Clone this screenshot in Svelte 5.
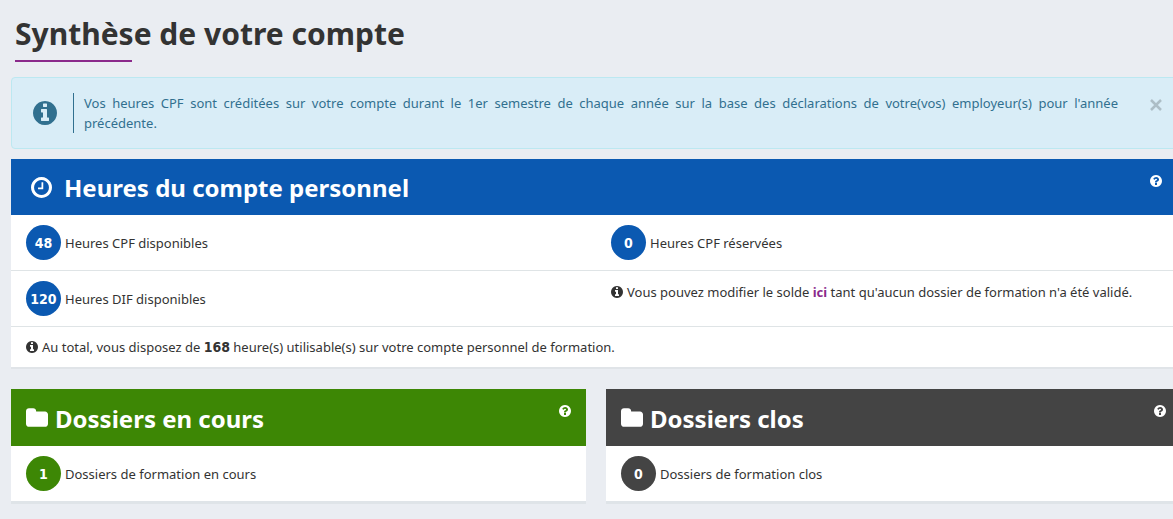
<script lang="ts">
  type Folder = { title: string; label: string; count: number; tone: string };

  let showNotice = $state(true);

  const cpf = 48;
  const dif = 120;
  const reserved = 0;
  const total = cpf + dif;

  const folders: Folder[] = [
    { title: "Dossiers en cours", label: "Dossiers de formation en cours", count: 1, tone: "green" },
    { title: "Dossiers clos", label: "Dossiers de formation clos", count: 0, tone: "dark" },
  ];
</script>

{#snippet info()}
  <svg class="info" viewBox="128 128 1536 1536" aria-hidden="true">
    <path d="M1152 1376v-160q0-14-9-23t-23-9h-96v-512q0-14-9-23t-23-9h-320q-14 0-23 9t-9 23v160q0 14 9 23t23 9h96v320h-96q-14 0-23 9t-9 23v160q0 14 9 23t23 9h448q14 0 23-9t9-23zm-128-896v-160q0-14-9-23t-23-9h-192q-14 0-23 9t-9 23v160q0 14 9 23t23 9h192q14 0 23-9t9-23zm640 416q0 209-103 385.5t-279.5 279.5-385.5 103-385.5-103-279.5-279.5-103-385.5 103-385.5 279.5-279.5 385.5-103 385.5 103 279.5 279.5 103 385.5z" />
  </svg>
{/snippet}

{#snippet help()}
  <button class="help" type="button" aria-label="Aide">
    <svg viewBox="128 128 1536 1536" aria-hidden="true">
      <path d="M1024 1376v-192q0-14-9-23t-23-9h-192q-14 0-23 9t-9 23v192q0 14 9 23t23 9h192q14 0 23-9t9-23zm256-672q0-88-55.5-163t-138.5-116-170-41q-243 0-371 213-15 24 8 42l132 100q7 6 19 6 16 0 25-12 53-68 86-92 34-24 86-24 48 0 85.5 26t37.5 59q0 38-20 61t-68 45q-63 28-115.5 86.5t-52.5 125.5v36q0 14 9 23t23 9h192q14 0 23-9t9-23q0-19 21.5-49.5t54.5-49.5q32-18 49-28.5t46-35 44.5-48 28-60.5 12.5-81zm384 192q0 209-103 385.5t-279.5 279.5-385.5 103-385.5-103-279.5-279.5-103-385.5 103-385.5 279.5-279.5 385.5-103 385.5 103 279.5 279.5 103 385.5z" />
    </svg>
  </button>
{/snippet}

<div class="viewport">
  <main>
    <h1>Synthèse de votre compte</h1>

    {#if showNotice}
      <div class="notice" role="status">
        {@render info()}
        <p>
          Vos heures CPF sont créditées sur votre compte durant le 1er semestre de chaque année sur la
          base des déclarations de votre(vos) employeur(s) pour l'année précédente.
        </p>
        <button class="close" type="button" aria-label="Fermer" onclick={() => (showNotice = false)}>
          <svg viewBox="0 0 12 12" aria-hidden="true"><path d="M1 1l10 10M11 1L1 11" /></svg>
        </button>
      </div>
    {/if}

    <section class="panel blue">
      <header>
        <svg class="clock" viewBox="128 128 1536 1536" aria-hidden="true">
          <path d="M1024 544v448q0 14-9 23t-23 9h-320q-14 0-23-9t-9-23v-64q0-14 9-23t23-9h224v-352q0-14 9-23t23-9h64q14 0 23 9t9 23zm416 352q0-148-73-273t-198-198-273-73-273 73-198 198-73 273 73 273 198 198 273 73 273-73 198-198 73-273zm224 0q0 209-103 385.5t-279.5 279.5-385.5 103-385.5-103-279.5-279.5-103-385.5 103-385.5 279.5-279.5 385.5-103 385.5 103 279.5 279.5 103 385.5z" />
        </svg>
        <h2>Heures du compte personnel</h2>
        {@render help()}
      </header>
      <div class="row">
        <div class="cell"><span class="badge">{cpf}</span> Heures CPF disponibles</div>
        <div class="cell"><span class="badge">{reserved}</span> Heures CPF réservées</div>
      </div>
      <div class="row">
        <div class="cell"><span class="badge">{dif}</span> Heures DIF disponibles</div>
        <div class="cell top">
          {@render info()}
          <p>Vous pouvez modifier le solde <a href="#solde">ici</a> tant qu'aucun dossier de formation n'a été validé.</p>
        </div>
      </div>
      <div class="cell">
        {@render info()}
        <p>Au total, vous disposez de <strong>{total}</strong> heure(s) utilisable(s) sur votre compte personnel de formation.</p>
      </div>
    </section>

    <div class="folders">
      {#each folders as folder (folder.title)}
        <section class="panel {folder.tone}">
          <header>
            <svg class="folder" viewBox="64 128 1664 1408" aria-hidden="true">
              <path d="M1728 608v704q0 92-66 158t-158 66h-1216q-92 0-158-66t-66-158v-960q0-92 66-158t158-66h320q92 0 158 66t66 158v32h672q92 0 158 66t66 158z" />
            </svg>
            <h2>{folder.title}</h2>
            {@render help()}
          </header>
          <div class="cell"><span class="badge">{folder.count}</span> {folder.label}</div>
        </section>
      {/each}
    </div>
  </main>
</div>

<style>
  :global(body) {
    background: #eaedf2;
  }

  .viewport {
    overflow: hidden;
    color: #333;
    font: 13px/20px Tahoma, "Noto Sans", sans-serif;
  }

  /* the content column runs slightly past the right edge of the window */
  main {
    margin: 0 -8px 0 11px;
    padding: 12px 0 15px;
  }

  h1,
  h2,
  p {
    margin: 0;
  }

  svg {
    display: block;
    flex: none;
    fill: currentColor;
  }

  button {
    padding: 0;
    border: 0;
    background: none;
    color: inherit;
    cursor: pointer;
  }

  h1 {
    width: fit-content;
    margin: 0 4px 15px;
    padding-bottom: 6px;
    background: linear-gradient(#8b2a8b, #8b2a8b) left bottom / 30% 2px no-repeat;
    font-size: 30px;
    line-height: 44px;
  }

  .notice {
    display: flex;
    align-items: center;
    margin-bottom: 10px;
    padding: 15px 18px 15px 21px;
    border: 1px solid #bce8f1;
    border-radius: 4px;
    background: #d9edf7;
    color: #31708f;
  }

  .notice .info {
    width: 24px;
    height: 24px;
  }

  .notice p {
    flex: 1;
    margin: 0 32px 0 16px;
    padding-left: 10px;
    border-left: 1px solid #31708f;
    text-align: justify;
  }

  .close {
    align-self: flex-start;
    padding-top: 6px;
    color: #adbec6;
  }

  .close svg {
    width: 12px;
    height: 12px;
    fill: none;
    stroke: currentColor;
    stroke-width: 2.5;
  }

  .panel {
    background: #fff;
    box-shadow: 0 2px 0 #e0e4e8;
  }

  .blue {
    --tone: #0b59b1;
  }

  .green {
    --tone: #3d8705;
  }

  .dark {
    --tone: #444;
  }

  header {
    display: flex;
    align-items: center;
    gap: 7px;
    height: 57px;
    padding: 0 15px;
    background: var(--tone);
    color: #fff;
  }

  .blue header {
    gap: 12px;
    height: 56px;
    padding: 0 19px 0 20px;
  }

  h2 {
    flex: 1;
    padding-top: 2px;
    font-size: 24px;
    line-height: 32px;
  }

  .clock {
    width: 21px;
    height: 21px;
  }

  .folder {
    width: 22px;
    height: 19px;
  }

  .help {
    align-self: flex-start;
    padding-top: 16px;
  }

  .help svg {
    width: 12px;
    height: 12px;
  }

  .row {
    display: grid;
    grid-template-columns: 1fr 1fr;
    border-bottom: 1px solid #dfe4e6;
  }

  .cell {
    display: flex;
    align-items: center;
    gap: 4px;
    padding: 10px 15px;
  }

  .cell .info {
    width: 12px;
    height: 12px;
  }

  .top {
    align-items: flex-start;
    padding-top: 11px;
  }

  .top .info {
    margin-top: 4px;
  }

  .badge {
    display: grid;
    place-items: center;
    width: 35px;
    height: 35px;
    border-radius: 50%;
    background: var(--tone);
    color: #fff;
  }

  .badge,
  strong {
    font-family: Tahoma, "DejaVu Sans Condensed", sans-serif;
    font-size: 14px;
    font-weight: bold;
  }

  a {
    color: #8b2a8b;
    font-weight: bold;
    text-decoration: none;
  }

  .folders {
    display: grid;
    grid-template-columns: 1fr 1fr;
    gap: 20px;
    margin-top: 22px;
  }

  .folders .panel {
    box-shadow: 0 3px 0 #dfe4e8;
  }
</style>
